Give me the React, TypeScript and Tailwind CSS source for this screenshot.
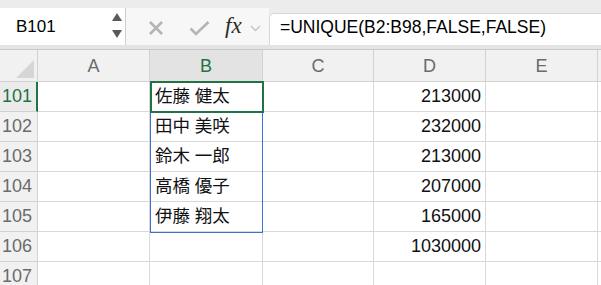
import React from "react";

const cols = ["A", "B", "C", "D", "E"];

const rows: { n: number; b?: string; d?: string }[] = [
  { n: 101, b: "佐藤 健太", d: "213000" },
  { n: 102, b: "田中 美咲", d: "232000" },
  { n: 103, b: "鈴木 一郎", d: "213000" },
  { n: 104, b: "高橋 優子", d: "207000" },
  { n: 105, b: "伊藤 翔太", d: "165000" },
  { n: 106, d: "1030000" },
  { n: 107 },
];

const font = { fontFamily: '"Liberation Sans", "Noto Sans CJK JP", sans-serif' };

function FormulaBar() {
  return (
    <div className="flex h-[45px] bg-[#ececec] pt-[8px]">
      <div className="relative flex w-[126px] items-center border-r border-[#cfcfcf] bg-white pl-[16px] text-[17px] text-black">
        B101
        <div className="absolute right-[3px] top-[5px] flex flex-col gap-[9px]">
          <svg width="10" height="8" viewBox="0 0 10 8">
            <path d="M5 0 L10 8 L0 8 Z" fill="#5a5a5a" />
          </svg>
          <svg width="10" height="8" viewBox="0 0 10 8">
            <path d="M0 0 L10 0 L5 8 Z" fill="#5a5a5a" />
          </svg>
        </div>
      </div>
      <div className="flex w-[143px] items-center bg-[#f7f7f7] pl-[22px]">
        <svg width="16" height="16" viewBox="0 0 16 16" className="mt-[2px]">
          <path d="M2 2 L14 14 M14 2 L2 14" stroke="#b5b5b5" strokeWidth="2.6" />
        </svg>
        <svg width="21" height="16" viewBox="0 0 21 16" className="ml-[25px] mt-[2px]">
          <path d="M1.5 8.5 L7 14 L19.5 2" stroke="#b5b5b5" strokeWidth="2.6" fill="none" />
        </svg>
        <span
          className="ml-[15px] text-[23px] italic text-[#2a2a2a]"
          style={{ fontFamily: '"Liberation Serif", serif' }}
        >
          fx
        </span>
        <svg width="11" height="7" viewBox="0 0 11 7" className="ml-[8px] mt-[4px]">
          <path d="M1 1 L5.5 5.5 L10 1" stroke="#c4c4c4" strokeWidth="1.4" fill="none" />
        </svg>
      </div>
      <div className="mt-[5px] flex flex-1 items-center rounded-tl-[5px] border-l border-t border-[#d8d8d8] bg-white pb-[4px] pl-[10px] text-[17.5px] text-black">
        =UNIQUE(B2:B98,FALSE,FALSE)
      </div>
    </div>
  );
}

export default function App() {
  return (
    <div className="h-[285px] w-[601px] overflow-hidden bg-white" style={font}>
      <FormulaBar />
      <div className="h-[5px] border-b border-[#c9c9c9] bg-[#e4e4e4]" />
      <div className="relative">
        <div className="grid grid-cols-[38px_112px_113px_111px_112px_112px_3px] grid-rows-[32px_repeat(7,30px)]">
          <div className="relative border-b border-r border-[#d2d2d2] bg-[#f1f1f1]">
            <svg width="18" height="18" viewBox="0 0 18 18" className="absolute bottom-[3px] right-[3px]">
              <path d="M18 0 L18 18 L0 18 Z" fill="#d6d6d6" />
            </svg>
          </div>
          {cols.map((c) => (
            <div
              key={c}
              className={
                c === "B"
                  ? "flex items-center justify-center border-b border-r border-[#d2d2d2] bg-[#e3e3e3] pt-[2px] text-[18px] text-[#217346]"
                  : "flex items-center justify-center border-b border-r border-[#d2d2d2] bg-[#f1f1f1] pt-[2px] text-[18px] text-[#6b6b6b]"
              }
            >
              {c}
            </div>
          ))}
          <div className="border-b border-[#d2d2d2] bg-[#f1f1f1]" />

          {rows.map((r) => (
            <React.Fragment key={r.n}>
              <div
                className={
                  r.n === 101
                    ? "flex items-center border-b border-r-2 border-b-[#d2d2d2] border-r-[#217346] bg-[#ebebeb] pl-[2px] text-[18px] text-[#217346]"
                    : "flex items-center border-b border-r border-[#d2d2d2] bg-[#f1f1f1] pl-[2px] text-[18px] text-[#6b6b6b]"
                }
              >
                {r.n}
              </div>
              <div className="border-b border-r border-[#d8d8d8]" />
              <div className="flex items-center border-b border-r border-[#d8d8d8] pl-[5px] text-[17.5px] text-[#111]">
                {r.b}
              </div>
              <div className="border-b border-r border-[#d8d8d8]" />
              <div className="flex items-center justify-end border-b border-r border-[#d8d8d8] pr-[4px] text-[18px] text-[#111]">
                {r.d}
              </div>
              <div className="border-b border-r border-[#d8d8d8]" />
              <div className="border-b border-[#d8d8d8]" />
            </React.Fragment>
          ))}
        </div>
        {/* spill range */}
        <div className="pointer-events-none absolute left-[150px] top-[62px] h-[121px] w-[113px] border-[1.5px] border-[#3f6fd6]" />
        {/* active cell */}
        <div className="pointer-events-none absolute left-[150px] top-[31px] h-[32px] w-[114px] border-2 border-[#217346]" />
      </div>
    </div>
  );
}
